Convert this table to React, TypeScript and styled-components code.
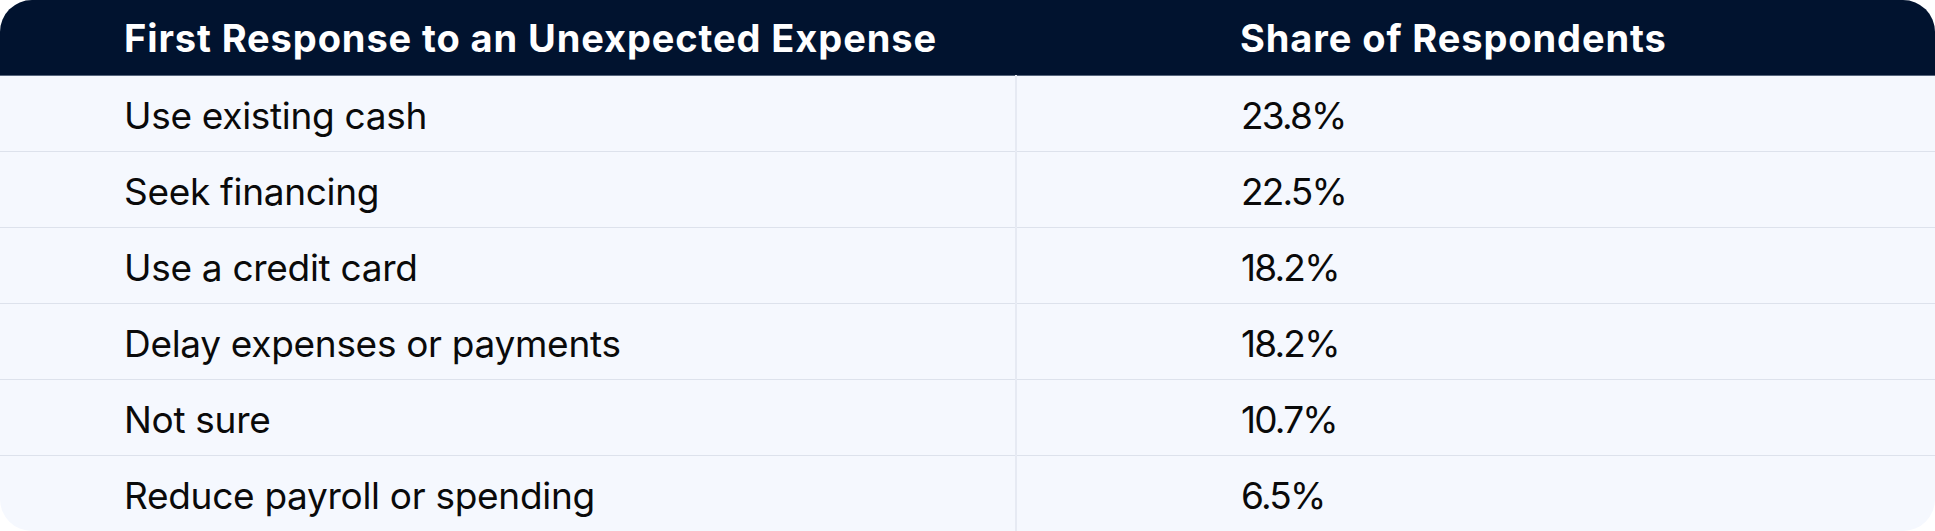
import React from "react";
import styled, { createGlobalStyle } from "styled-components";

const Global = createGlobalStyle`
  html, body { margin: 0; padding: 0; background: #ffffff; }
  body { font-family: Inter, "Noto Sans", sans-serif; }
`;

const Wrap = styled.div`
  width: 1935px;
  height: 531px;
  border-radius: 32px;
  overflow: hidden;
  background: #f5f8fe;
`;

const Table = styled.table`
  width: 100%;
  border-collapse: collapse;
  table-layout: fixed;
`;

const HeadRow = styled.tr`
  background: #01132f;
  border-bottom: 1px solid #56657c;
`;

const Th = styled.th<{ $pad: number }>`
  height: 75px;
  padding: 0 0 0 ${(p) => p.$pad}px;
  text-align: left;
  color: #ffffff;
  font-family: Inter, "Noto Sans", sans-serif;
  font-weight: 700;
  font-size: 38px;
  letter-spacing: 0.9px;
  vertical-align: middle;
`;

const Row = styled.tr<{ $last: boolean }>`
  border-bottom: ${(p) => (p.$last ? "none" : "1px solid #dde2ec")};
`;

const Td = styled.td<{ $pad: number; $divider?: boolean; $numeric?: boolean }>`
  height: 76px;
  padding: 3px 0 0 ${(p) => p.$pad}px;
  box-sizing: border-box;
  color: #0a0a0a;
  font-family: Inter, "Noto Sans", sans-serif;
  font-weight: 400;
  font-size: 37px;
  letter-spacing: ${(p) => (p.$numeric ? "-1.8px" : "-0.3px")};
  vertical-align: middle;
  border-right: ${(p) => (p.$divider ? "2px solid #e6eaf3" : "none")};
`;

const rows: [string, string][] = [
  ["Use existing cash", "23.8%"],
  ["Seek financing", "22.5%"],
  ["Use a credit card", "18.2%"],
  ["Delay expenses or payments", "18.2%"],
  ["Not sure", "10.7%"],
  ["Reduce payroll or spending", "6.5%"],
];

export default function App() {
  return (
    <>
      <Global />
      <Wrap>
        <Table>
          <colgroup>
            <col style={{ width: "1016px" }} />
            <col />
          </colgroup>
          <thead>
            <HeadRow>
              <Th $pad={124}>First Response to an Unexpected Expense</Th>
              <Th $pad={224}>Share of Respondents</Th>
            </HeadRow>
          </thead>
          <tbody>
            {rows.map(([label, value], i) => (
              <Row key={label} $last={i === rows.length - 1}>
                <Td $pad={124} $divider>
                  {label}
                </Td>
                <Td $pad={224} $numeric>
                  {value}
                </Td>
              </Row>
            ))}
          </tbody>
        </Table>
      </Wrap>
    </>
  );
}
